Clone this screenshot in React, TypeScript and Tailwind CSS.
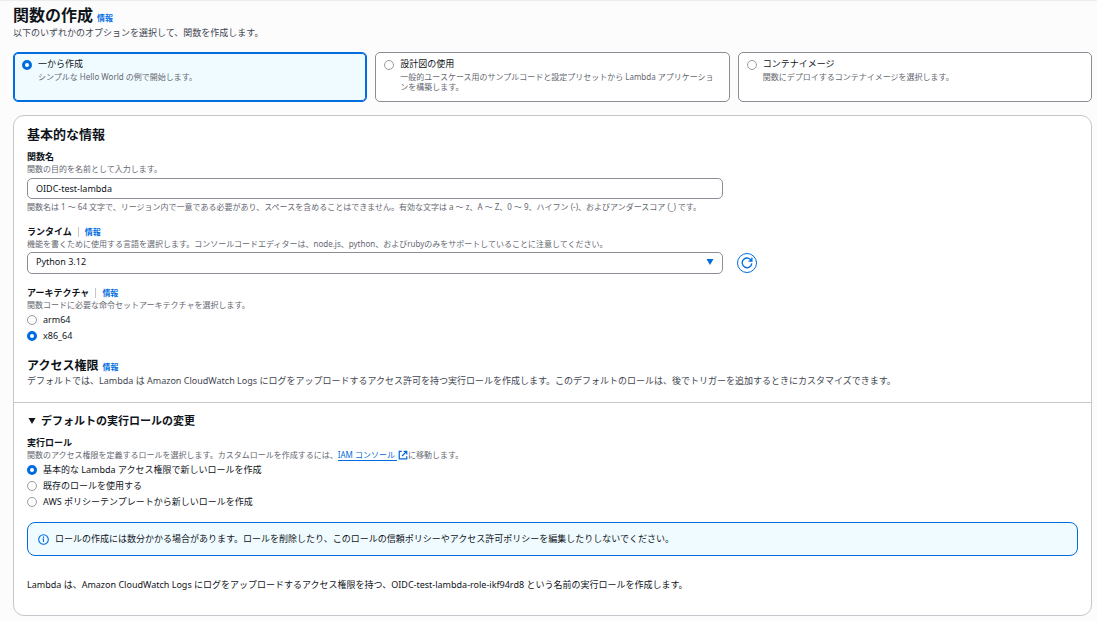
import { useState, type ReactNode } from "react"

type RadioProps = {
    name: string;
    label: string;
    checked: boolean;
    onChange: () => void;
}

const radioClass = "appearance-none shrink-0 size-[10px] rounded-full border border-[#9a9aa2] bg-white checked:border-[3px] checked:border-[#006ce0]"

const InfoLink = () => {
    return <a href="#info" className="text-[8px] leading-3 font-bold text-[#006ce0]">情報</a>
}

const Hint = ({ id, children }: { id?: string, children: ReactNode }) => {
    return <p id={id} className="text-[8px] leading-3 text-[#656871]">{children}</p>
}

const RadioRow = ({ name, label, checked, onChange }: RadioProps) => {
    return <label className="flex h-4 items-center gap-[6px] text-[9px] leading-4">
        <input type="radio" name={name} checked={checked} onChange={onChange} className={radioClass} />
        <span>{label}</span>
    </label>
}

const OptionCard = ({ name, label, checked, onChange, description }: RadioProps & { description: string }) => {
    return <label className={`flex gap-[6px] rounded-[5px] border pt-[3px] pr-3 pb-[9px] pl-2 ${checked ? "border-[#006ce0] bg-[#f0fbff] ring-1 ring-inset ring-[#006ce0]" : "border-[#8c8c94] bg-white"}`}>
        <input type="radio" name={name} checked={checked} onChange={onChange} className={`${radioClass} mt-1`} />
        <span className="block">
            <span className="block text-[9px] leading-4">{label}</span>
            <span className="block min-h-5 text-[8px] leading-[10px] text-[#656871]">{description}</span>
        </span>
    </label>
}

const ExternalIcon = () => {
    return <svg viewBox="0 0 16 16" fill="none" stroke="#006ce0" strokeWidth="2" className="ml-px inline-block size-[10px] align-[-2px]">
        <path d="M9 2h5v5M14 2 6.5 9.5M6 2H2v12h12v-4" />
    </svg>
}

const options = [
    { label: "一から作成", description: "シンプルな Hello World の例で開始します。" },
    { label: "設計図の使用", description: "一般的ユースケース用のサンプルコードと設定プリセットから Lambda アプリケーションを構築します。" },
    { label: "コンテナイメージ", description: "関数にデプロイするコンテナイメージを選択します。" },
]

const roles = [
    "基本的な Lambda アクセス権限で新しいロールを作成",
    "既存のロールを使用する",
    "AWS ポリシーテンプレートから新しいロールを作成",
]

export default function App() {
    const [option, setOption] = useState(0);
    const [name, setName] = useState("OIDC-test-lambda");
    const [runtime, setRuntime] = useState("Python 3.12");
    const [arch, setArch] = useState("x86_64");
    const [role, setRole] = useState(0);

    return <main lang="ja" className="min-h-screen bg-[#fcfcfd] pt-[5px] pr-[5px] pb-[5px] pl-[13px] font-['Noto_Sans','Noto_Sans_CJK_JP',sans-serif] text-[#0f141a] shadow-[inset_0_2px_1px_-1px_#e9ebed]">
        <header>
            <div className="flex items-baseline gap-1">
                <h1 className="text-base leading-5 font-bold">関数の作成</h1>
                <InfoLink />
            </div>
            <p className="text-[9px] leading-4 text-[#424650]">以下のいずれかのオプションを選択して、関数を作成します。</p>
        </header>

        <div className="mt-[11px] grid grid-cols-3 gap-2">
            {options.map((o, i) => <OptionCard key={o.label} name="option" label={o.label} description={o.description} checked={option === i} onChange={() => setOption(i)} />)}
        </div>

        <div className="mt-[13px] rounded-[11px] border border-[#c6c6cd] bg-white">
            <section className="px-[13px] pt-2 pb-[14px]">
                <h2 className="text-[13px] leading-5 font-bold">基本的な情報</h2>

                <div className="mt-[7px]">
                    <label htmlFor="name" className="block text-[9px] leading-3 font-bold">関数名</label>
                    <Hint>関数の目的を名前として入力します。</Hint>
                    <div className="mt-[3px] grid grid-cols-3 gap-x-[14px]">
                        <input id="name" type="text" value={name} aria-describedby="name-rule" onChange={(e) => {
                            setName(e.target.value);
                        }} className="col-span-2 h-[21px] rounded-[5px] border border-[#8c8c94] bg-white px-2 pb-px text-[9px] leading-4" />
                    </div>
                    <div className="mt-0.5">
                        <Hint id="name-rule">関数名は 1 ～ 64 文字で、リージョン内で一意である必要があり、スペースを含めることはできません。有効な文字は a ～ z、A ～ Z、0 ～ 9、ハイフン (-)、およびアンダースコア (_) です。</Hint>
                    </div>
                </div>

                <div className="mt-[13px]">
                    <div className="flex h-3 items-center">
                        <label htmlFor="runtime" className="text-[9px] leading-3 font-bold">ランタイム</label>
                        <span className="mx-[6px] h-[10px] border-l border-[#c6c6cd]"></span>
                        <InfoLink />
                    </div>
                    <Hint>機能を書くために使用する言語を選択します。コンソールコードエディターは、node.js、python、およびrubyのみをサポートしていることに注意してください。</Hint>
                    <div className="mt-0.5 grid grid-cols-3 items-center gap-x-[14px]">
                        <div className="relative col-span-2">
                            <select id="runtime" value={runtime} onChange={(e) => setRuntime(e.target.value)} className="block h-[22px] w-full appearance-none rounded-[5px] border border-[#8c8c94] bg-white px-2 pb-0.5 text-[9px] leading-4">
                                <option>Python 3.12</option>
                                <option>Node.js 20.x</option>
                                <option>Ruby 3.3</option>
                            </select>
                            <svg viewBox="0 0 8 6" fill="#006ce0" className="pointer-events-none absolute top-[7px] right-[9px] h-[6px] w-2">
                                <path d="M.5 0h7L4 6z" />
                            </svg>
                        </div>
                        <button type="button" aria-label="更新" className="flex size-5 items-center justify-center rounded-full border border-[#006ce0] bg-white">
                            <svg viewBox="0 0 16 16" fill="none" stroke="#006ce0" strokeWidth="1.8" className="size-3">
                                <path d="M10 5.5h4.5V1M14 5.5A6.4 6.4 0 1 0 14.4 8.5" />
                            </svg>
                        </button>
                    </div>
                </div>

                <fieldset className="mt-[13px]">
                    <legend className="flex h-3 items-center">
                        <span className="text-[9px] leading-3 font-bold">アーキテクチャ</span>
                        <span className="mx-[6px] h-[10px] border-l border-[#c6c6cd]"></span>
                        <InfoLink />
                    </legend>
                    <Hint>関数コードに必要な命令セットアーキテクチャを選択します。</Hint>
                    <div className="mt-px">
                        {["arm64", "x86_64"].map((a) => <RadioRow key={a} name="arch" label={a} checked={arch === a} onChange={() => setArch(a)} />)}
                    </div>
                </fieldset>

                <div className="mt-[14px] flex items-baseline gap-1">
                    <h3 className="text-xs leading-4 font-bold">アクセス権限</h3>
                    <InfoLink />
                </div>
                <p className="text-[9px] leading-[14px] text-[#424650]">デフォルトでは、Lambda は Amazon CloudWatch Logs にログをアップロードするアクセス許可を持つ実行ロールを作成します。このデフォルトのロールは、後でトリガーを追加するときにカスタマイズできます。</p>
            </section>

            <section className="border-t border-[#c6c6cd] px-[13px] pt-[10px] pb-[23px]">
                <details open>
                    <summary className="flex list-none items-center gap-[5px] pl-[1px] text-[11px] leading-4 font-bold">
                        <svg viewBox="0 0 8 6" fill="#0f141a" className="h-[6px] w-2">
                            <path d="M.5 0h7L4 6z" />
                        </svg>
                        デフォルトの実行ロールの変更
                    </summary>

                    <fieldset className="mt-2">
                        <legend className="text-[9px] leading-3 font-bold">実行ロール</legend>
                        <Hint>
                            関数のアクセス権限を定義するロールを選択します。カスタムロールを作成するには、<a href="#iam" className="text-[#006ce0]"><span className="border-b border-[#006ce0]">IAM コンソール </span><ExternalIcon /></a>に移動します。
                        </Hint>
                        <div className="mt-px">
                            {roles.map((r, i) => <RadioRow key={r} name="role" label={r} checked={role === i} onChange={() => setRole(i)} />)}
                        </div>
                    </fieldset>

                    <div className="mt-3 flex items-center gap-[6px] rounded-lg border border-[#006ce0] bg-[#f0fbff] px-[10px] py-2 text-[9px] leading-4">
                        <svg viewBox="0 0 16 16" fill="none" stroke="#006ce0" strokeWidth="1.6" className="size-[11px] shrink-0">
                            <circle cx="8" cy="8" r="7" />
                            <path d="M8 3.8v2M6.5 7.3H8v4.2" />
                        </svg>
                        <p>ロールの作成には数分かかる場合があります。ロールを削除したり、このロールの信頼ポリシーやアクセス許可ポリシーを編集したりしないでください。</p>
                    </div>

                    <p className="mt-[22px] text-[9px] leading-[14px]">Lambda は、Amazon CloudWatch Logs にログをアップロードするアクセス権限を持つ、OIDC-test-lambda-role-ikf94rd8 という名前の実行ロールを作成します。</p>
                </details>
            </section>
        </div>
    </main>
}
